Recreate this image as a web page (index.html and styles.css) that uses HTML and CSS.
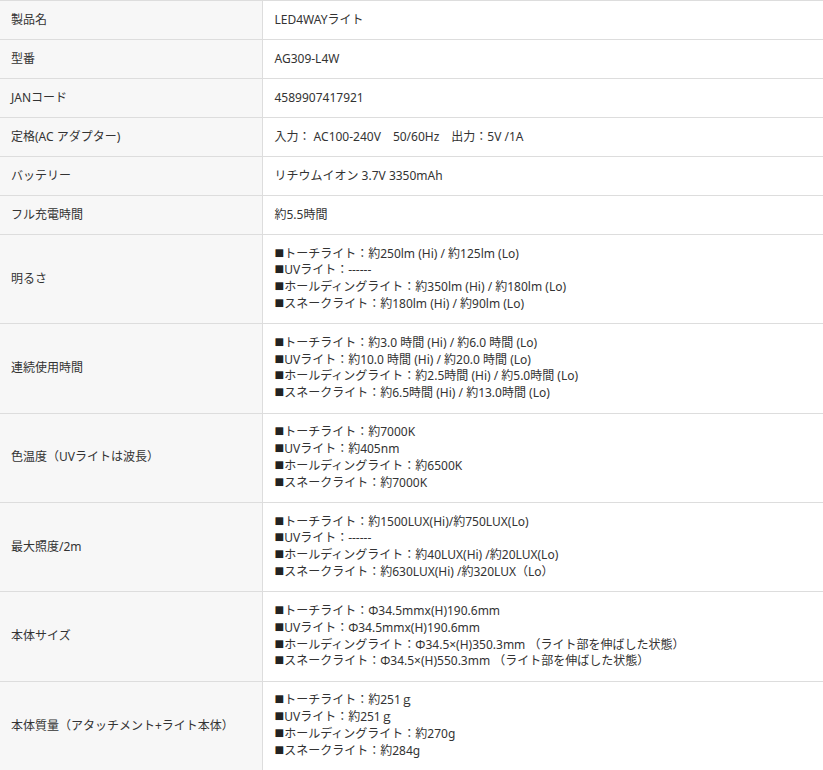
FILE: index.html
```html
<!DOCTYPE html>
<html lang="ja">
<head>
    <meta charset="UTF-8">
    <meta name="viewport" content="width=device-width, initial-scale=1.0">
    <title>製品仕様</title>
    <link rel="stylesheet" href="styles.css">
</head>
<body>
    <table class="spec-table">
        <colgroup>
            <col class="col-label">
            <col>
        </colgroup>
        <tbody>
            <tr>
                <th>製品名</th>
                <td>LED4WAYライト</td>
            </tr>
            <tr>
                <th>型番</th>
                <td>AG309-L4W</td>
            </tr>
            <tr>
                <th>JANコード</th>
                <td>4589907417921</td>
            </tr>
            <tr>
                <th>定格(AC アダプター)</th>
                <td>入力： AC100-240V　50/60Hz　出力：5V /1A</td>
            </tr>
            <tr>
                <th>バッテリー</th>
                <td>リチウムイオン 3.7V 3350mAh</td>
            </tr>
            <tr>
                <th>フル充電時間</th>
                <td>約5.5時間</td>
            </tr>
            <tr>
                <th>明るさ</th>
                <td>
                    <span class="mark">■</span>トーチライト：約250lm (Hi) / 約125lm (Lo)<br>
                    <span class="mark">■</span>UVライト：------<br>
                    <span class="mark">■</span>ホールディングライト：約350lm (Hi) / 約180lm (Lo)<br>
                    <span class="mark">■</span>スネークライト：約180lm (Hi) / 約90lm (Lo)
                </td>
            </tr>
            <tr>
                <th>連続使用時間</th>
                <td>
                    <span class="mark">■</span>トーチライト：約3.0 時間 (Hi) / 約6.0 時間 (Lo)<br>
                    <span class="mark">■</span>UVライト：約10.0 時間 (Hi) / 約20.0 時間 (Lo)<br>
                    <span class="mark">■</span>ホールディングライト：約2.5時間 (Hi) / 約5.0時間 (Lo)<br>
                    <span class="mark">■</span>スネークライト：約6.5時間 (Hi) / 約13.0時間 (Lo)
                </td>
            </tr>
            <tr>
                <th>色温度（UVライトは波長）</th>
                <td>
                    <span class="mark">■</span>トーチライト：約7000K<br>
                    <span class="mark">■</span>UVライト：約405nm<br>
                    <span class="mark">■</span>ホールディングライト：約6500K<br>
                    <span class="mark">■</span>スネークライト：約7000K
                </td>
            </tr>
            <tr>
                <th>最大照度/2m</th>
                <td>
                    <span class="mark">■</span>トーチライト：約1500LUX(Hi)/約750LUX(Lo)<br>
                    <span class="mark">■</span>UVライト：------<br>
                    <span class="mark">■</span>ホールディングライト：約40LUX(Hi) /約20LUX(Lo)<br>
                    <span class="mark">■</span>スネークライト：約630LUX(Hi) /約320LUX（Lo）
                </td>
            </tr>
            <tr>
                <th>本体サイズ</th>
                <td>
                    <span class="mark">■</span>トーチライト：Φ34.5mmx(H)190.6mm<br>
                    <span class="mark">■</span>UVライト：Φ34.5mmx(H)190.6mm<br>
                    <span class="mark">■</span>ホールディングライト：Φ34.5×(H)350.3mm （ライト部を伸ばした状態）<br>
                    <span class="mark">■</span>スネークライト：Φ34.5×(H)550.3mm （ライト部を伸ばした状態）
                </td>
            </tr>
            <tr>
                <th>本体質量（アタッチメント+ライト本体）</th>
                <td>
                    <span class="mark">■</span>トーチライト：約251ｇ<br>
                    <span class="mark">■</span>UVライト：約251ｇ<br>
                    <span class="mark">■</span>ホールディングライト：約270g<br>
                    <span class="mark">■</span>スネークライト：約284g
                </td>
            </tr>
        </tbody>
    </table>
</body>
</html>
```

FILE: styles.css
```css
body {
    margin: 0;
    background-color: #fff;
    color: #333;
    font-family: "Noto Sans", "Noto Sans CJK JP", sans-serif;
    font-size: 12px;
    line-height: 1.4;
}
.spec-table {
    width: 100%;
    border-collapse: collapse;
    table-layout: fixed;
}
.col-label {
    width: 262px;
}
.spec-table th,
.spec-table td {
    padding: 10.6px 12px;
    border-top: 1px solid #ddd;
    border-bottom: 1px solid #ddd;
    text-align: left;
    vertical-align: middle;
}
.spec-table th {
    padding-left: 11px;
    font-weight: normal;
    background-color: #f7f7f7;
    border-right: 1px solid #ddd;
}
.mark {
    font-family: "Liberation Sans", sans-serif;
    font-size: 16px;
    line-height: 0;
    color: #222;
}
```
